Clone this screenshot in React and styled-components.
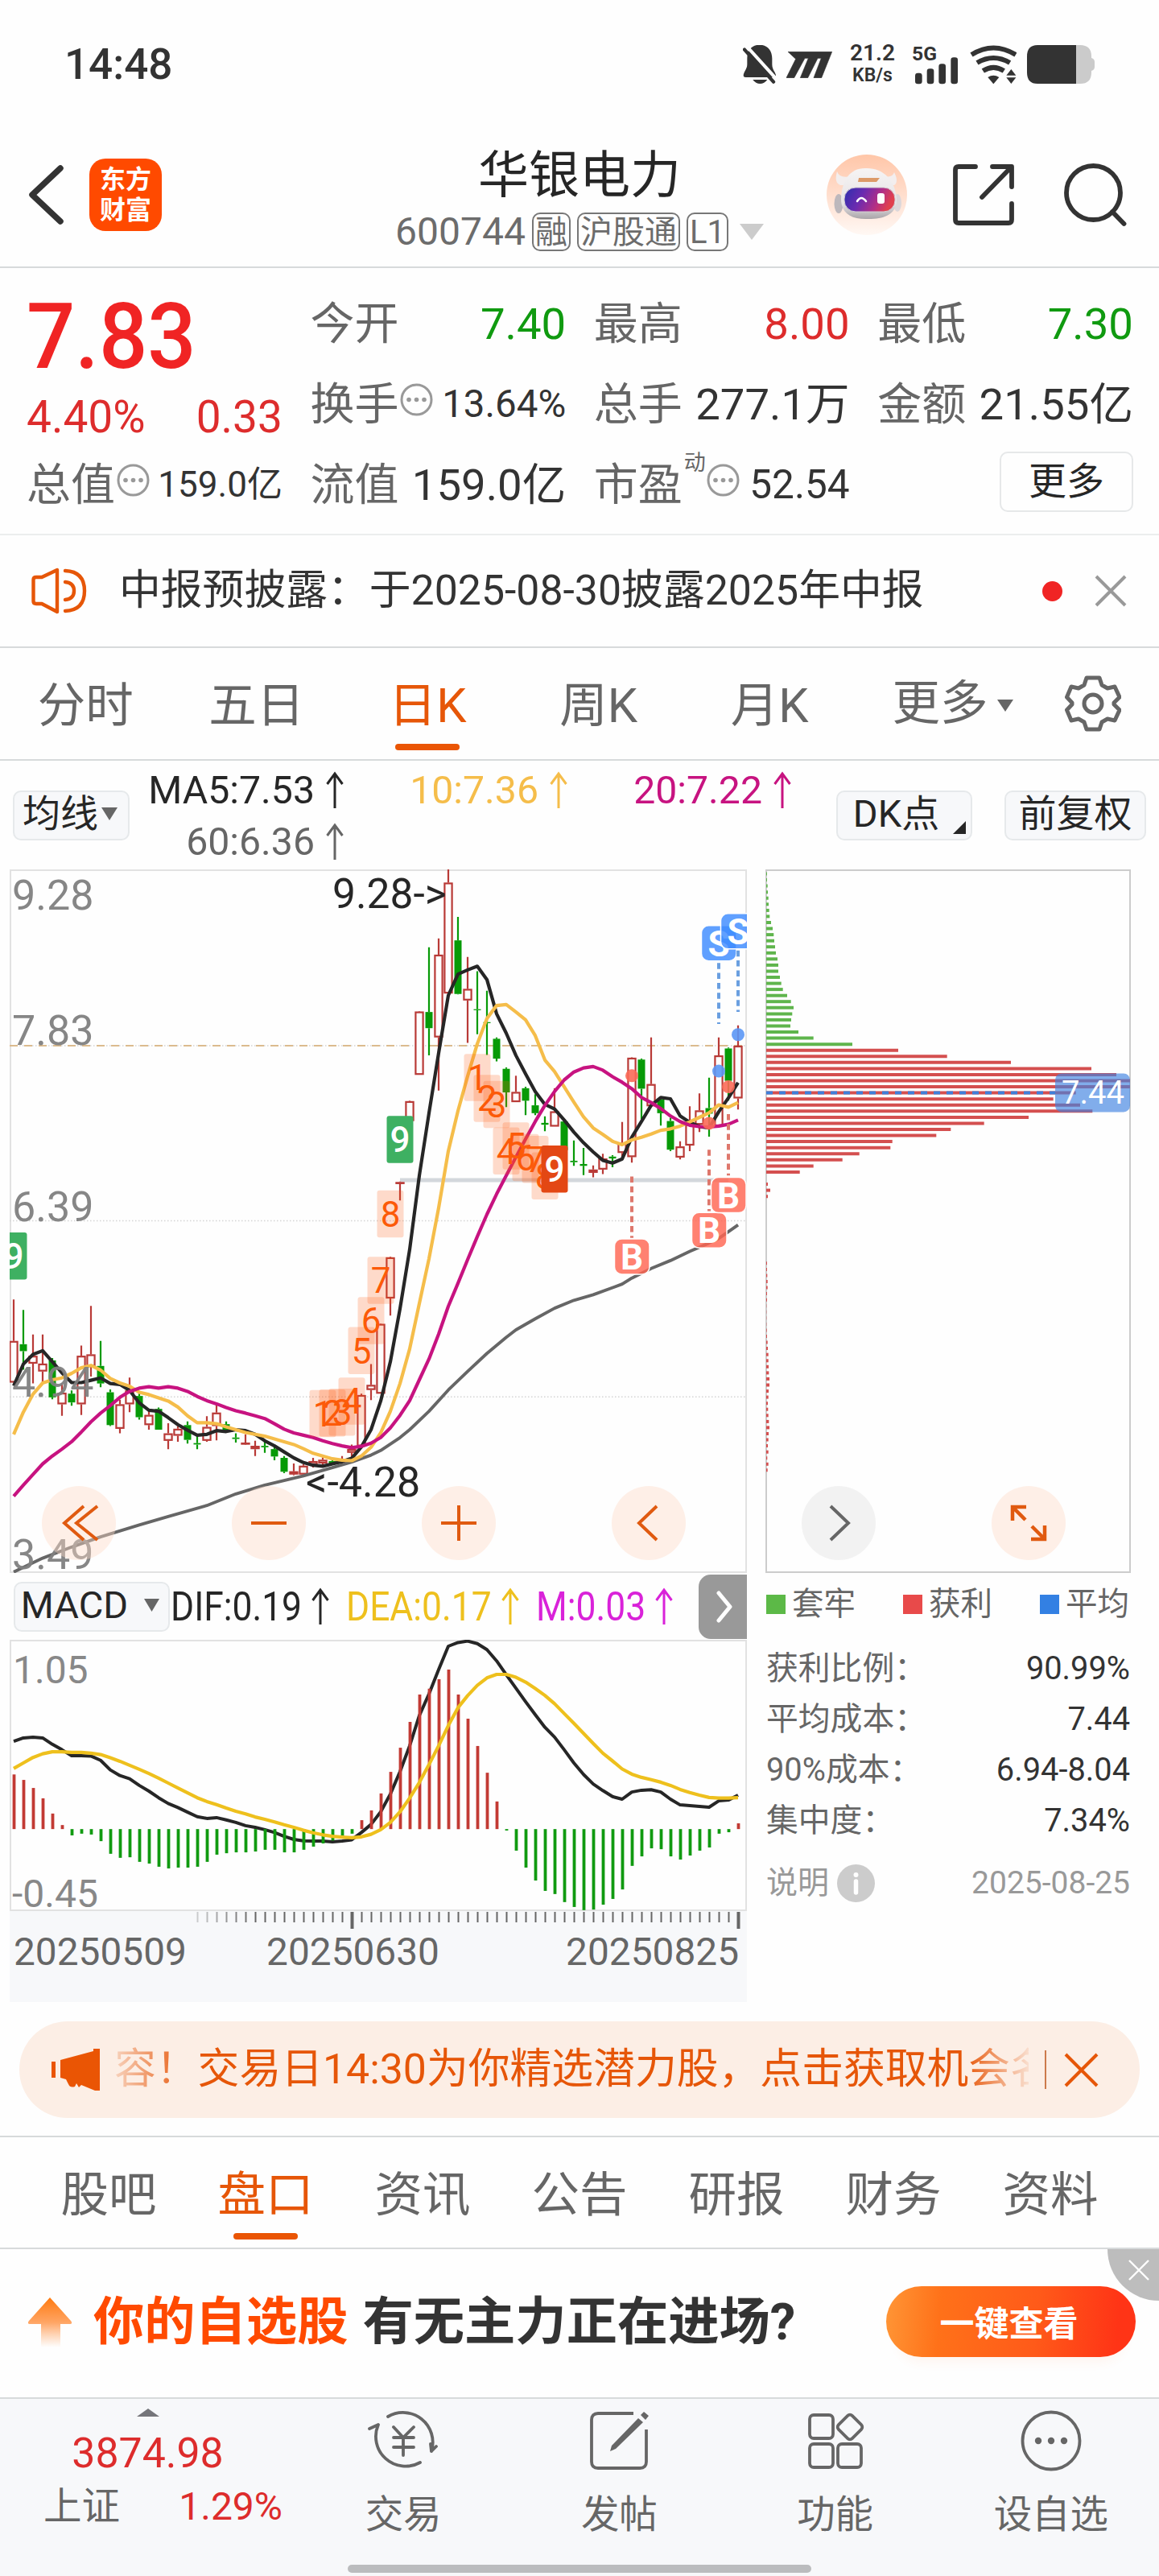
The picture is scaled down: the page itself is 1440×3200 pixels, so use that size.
import React from "react";
import styled, { createGlobalStyle } from "styled-components";

const c = {
  ink: "#262626",
  text: "#333333",
  sub: "#666666",
  mute: "#999999",
  axis: "#888888",
  red: "#dd2c2c",
  green: "#109a10",
  orange: "#e65608",
  line: "#d7dadb",
  panel: "#f7f8fa",
  ma10: "#f5bd4a",
  ma20: "#c71380",
  dea: "#eec01d",
  macd: "#d922d9",
};

const Global = createGlobalStyle`
  * { box-sizing: border-box; }
  body {
    margin: 0;
    background: #fefefe;
    color: ${c.text};
    font-family: Roboto, "Noto Sans CJK SC", sans-serif;
  }
  svg { display: block; flex: none; }
  svg text { font-family: Roboto, "Noto Sans CJK SC", sans-serif; }
`;

const Screen = styled.main`
  width: 1440px;
  height: 3200px;
  display: flex;
  flex-direction: column;
  overflow: hidden;
  white-space: nowrap;
`;

/* ---------- status bar ---------- */

const StatusBar = styled.div`
  height: 152px;
  padding: 8px 80px 0 80px;
  display: flex;
  align-items: center;
`;
const Clock = styled.div`
  font-size: 53px;
  line-height: 60px;
  font-weight: 500;
  margin-right: auto;
`;
const StatusItem = styled.div`
  margin-left: ${(p) => p.$gap}px;
`;
const Speed = styled.div`
  width: 56px;
  display: flex;
  flex-direction: column;
  align-items: center;
  font-weight: 600;
  font-size: 23px;
  line-height: 28px;
  span:first-child { font-size: 28px; line-height: 28px; }
`;

/* ---------- header ---------- */

const Header = styled.header`
  height: 181px;
  border-bottom: 2px solid ${c.line};
  display: grid;
  grid-template-columns: 1fr auto 1fr;
`;
const HeaderLeft = styled.div`
  display: flex;
  align-items: center;
  gap: 31px;
  padding-left: 34px;
`;
const Logo = styled.div`
  width: 90px;
  height: 90px;
  border-radius: 20px;
  background: #ff4a00;
  color: #fff;
  font-weight: 700;
  font-size: 32px;
  line-height: 38px;
  display: flex;
  flex-direction: column;
  align-items: center;
  justify-content: center;
  padding-top: 1px;
`;
const TitleBlock = styled.div`
  padding-top: 28px;
  display: flex;
  flex-direction: column;
  align-items: center;
`;
const Title = styled.h1`
  margin: 0 0 9px;
  font-size: 63px;
  line-height: 75px;
  font-weight: 400;
  color: ${c.ink};
`;
const CodeRow = styled.div`
  display: flex;
  align-items: center;
  height: 48px;
  gap: 8px;
  font-size: 48px;
  line-height: 48px;
  color: #6c6c6c;
`;
const Tag = styled.span`
  height: 48px;
  line-height: 45px;
  padding: 0 2px;
  border: 2px solid #777;
  border-radius: 10px;
  font-size: 40px;
`;
const HeaderRight = styled.div`
  display: flex;
  align-items: center;
  justify-content: flex-end;
  gap: 56px;
  padding-right: 39px;
  svg:nth-child(2) { margin-right: 4px; }
`;

/* ---------- quote ---------- */

const Quote = styled.section`
  height: 332px;
  padding: 19px 32px 0 33px;
  border-bottom: 2px solid #eceeee;
  display: grid;
  grid-template-columns: repeat(4, 1fr);
  grid-template-rows: repeat(3, 100px);
  column-gap: 34.5px;
  line-height: 70px;
`;
const PriceBlock = styled.div`
  grid-row: span 2;
  color: ${c.red};
`;
const Price = styled.div`
  padding-top: 2px;
  font-size: 113px;
  line-height: 130px;
  font-weight: 500;
  color: #f02424;
  transform: scaleX(0.94);
  transform-origin: left center;
`;
const Change = styled.div`
  display: flex;
  justify-content: space-between;
  font-size: 55px;
  line-height: 69px;
`;
const Stat = styled.div`
  display: flex;
  align-items: center;
`;
const StatLabel = styled.span`
  font-size: 55px;
  color: ${c.sub};
`;
const Sup = styled.span`
  font-size: 27px;
  line-height: 30px;
  color: ${c.sub};
  align-self: flex-start;
  margin: 8px -1px 0 2px;
`;
const StatValue = styled.span`
  margin-left: auto;
  font-size: ${(p) => p.$size || 54.5}px;
  color: ${(p) => p.$color || c.text};
`;
const MoreButton = styled.button`
  width: 166px;
  height: 75px;
  margin: -8px 0 0 auto;
  padding: 0;
  align-self: center;
  border: 2px solid #e6e8e9;
  border-radius: 10px;
  background: transparent;
  font: inherit;
  font-size: 47px;
  line-height: 70px;
  color: ${c.ink};
`;

/* ---------- notice ---------- */

const Notice = styled.section`
  height: 140px;
  padding: 0 40px 0 39px;
  border-bottom: 2px solid ${c.line};
  display: flex;
  align-items: center;
`;
const NoticeText = styled.span`
  margin: 0 auto 0 39px;
  font-size: 51.8px;
  line-height: 70px;
`;
const RedDot = styled.i`
  width: 25px;
  height: 25px;
  margin-right: 40px;
  border-radius: 50%;
  background: #f02424;
`;

/* ---------- tabs ---------- */

const TabBar = styled.nav`
  height: ${(p) => p.$height}px;
  padding: 6px 0 0 ${(p) => p.$left}px;
  border-bottom: 2px solid ${c.line};
  display: flex;
`;
const Tab = styled.a`
  width: ${(p) => p.$width}px;
  display: flex;
  flex-direction: column;
  align-items: center;
  font-size: 59.5px;
  line-height: 132px;
  color: ${(p) => (p.$active ? c.orange : c.sub)};
  &::after {
    content: "";
    width: 80px;
    height: 8px;
    margin-top: -19px;
    border-radius: 4px;
    background: ${(p) => (p.$active ? "#ea5504" : "transparent")};
  }
`;
const MoreTab = styled.a`
  width: 214px;
  padding: 0 0 6px 46px;
  display: flex;
  align-items: center;
  gap: 11px;
  font-size: 59.5px;
  line-height: 132px;
  color: ${c.sub};
  svg { margin-top: 4px; }
`;
const GearWrap = styled.div`
  padding: 0 0 6px 46px;
  display: flex;
  align-items: center;
`;

/* ---------- moving average row ---------- */

const MaRow = styled.div`
  height: 135px;
  padding: 0 16px;
  display: flex;
  align-items: center;
`;
const Chip = styled.button`
  position: relative;
  width: ${(p) => p.$width}px;
  height: 62px;
  padding: 0 ${(p) => p.$right || 0}px 3px 0;
  border: 2px solid #e6e9eb;
  border-radius: 10px;
  background: ${c.panel};
  display: flex;
  align-items: center;
  justify-content: center;
  gap: ${(p) => p.$gap || 0}px;
  font: inherit;
  font-size: 47px;
  line-height: 56px;
  white-space: nowrap;
  color: ${c.ink};
`;
const ChipCorner = styled.i`
  position: absolute;
  right: 6px;
  bottom: 6px;
  border-left: 16px solid transparent;
  border-bottom: 16px solid ${c.ink};
`;
const MaLegend = styled.div`
  margin: 2px auto 0 24px;
  display: grid;
  grid-template-columns: 242px 278px 278px;
`;
const MaItem = styled.div`
  display: flex;
  justify-content: flex-end;
  align-items: center;
  gap: 14px;
  font-size: 48.2px;
  line-height: 64px;
  color: ${(p) => p.$color};
`;
const ChipGroup = styled.div`
  display: flex;
  gap: 40px;
`;

/* ---------- charts ---------- */

const Charts = styled.section`
  position: relative;
  height: 1407px;
  padding-left: 12px;
  display: grid;
  grid-template-columns: 916px 454px;
  column-gap: 23px;
  align-items: start;
`;
const Column = styled.div`
  display: flex;
  flex-direction: column;
`;
const Controls = styled.div`
  position: absolute;
  left: 52px;
  top: 766px;
  display: flex;
  gap: 144px;
`;
const RoundButton = styled.button`
  width: 92px;
  height: 92px;
  padding: 0;
  border: 0;
  border-radius: 50%;
  background: ${(p) => (p.$gray ? "rgba(235,235,235,.65)" : "rgba(255,220,200,.42)")};
  display: flex;
  align-items: center;
  justify-content: center;
`;
const MacdHead = styled.div`
  height: 83px;
  padding-left: 5px;
  display: flex;
  align-items: center;
`;
const MacdValue = styled.div`
  width: ${(p) => p.$width}px;
  display: flex;
  align-items: center;
  justify-content: space-between;
  margin-left: ${(p) => p.$gap}px;
  color: ${(p) => p.$color};
  font-size: 50px;
  line-height: 60px;
`;
const Squeezed = styled.span`
  width: 0;
  transform: scaleX(0.888);
  transform-origin: left center;
`;
const NextButton = styled.button`
  width: 60px;
  height: 80px;
  margin-left: auto;
  padding: 0 0 0 6px;
  border: 0;
  border-radius: 15px 0 0 15px;
  background: #999;
  display: flex;
  align-items: center;
  justify-content: center;
`;
const Axis = styled.div`
  height: 113px;
  background: ${c.panel};
`;
const AxisDates = styled.div`
  display: flex;
  justify-content: space-between;
  padding: 0 10px 0 5px;
  font-size: 47.8px;
  line-height: 54px;
  color: ${c.sub};
  span:nth-child(2) { margin-right: 58px; }
`;
const Legend = styled.div`
  height: 78px;
  padding-left: 1px;
  display: grid;
  grid-template-columns: repeat(3, 170px);
  width: 454px;
`;
const LegendItem = styled.div`
  display: flex;
  align-items: center;
  gap: 8px;
  font-size: 39.5px;
  line-height: 50px;
  color: ${c.sub};
  &::before {
    content: "";
    width: 24px;
    height: 24px;
    background: ${(p) => p.$color};
  }
`;
const CostList = styled.div`
  padding-top: 9px;
`;
const CostRow = styled.div`
  height: ${(p) => p.$height || 63}px;
  padding: 0 1px;
  display: flex;
  align-items: center;
  justify-content: space-between;
  font-size: 39.8px;
  line-height: 50px;
  color: ${(p) => (p.$muted ? c.mute : c.sub)};
`;
const CostValue = styled.span`
  color: ${(p) => (p.$muted ? c.mute : c.text)};
  font-size: ${(p) => (p.$muted ? 39 : 39.8)}px;
`;
const Explain = styled.span`
  display: flex;
  align-items: center;
  gap: 10px;
  font-size: 39px;
`;

/* ---------- promo ---------- */

const PromoWrap = styled.section`
  height: 168px;
  padding: 24px 24px 0;
  border-bottom: 2px solid ${c.line};
`;
const Promo = styled.div`
  height: 120px;
  padding: 0 51px 0 40px;
  border-radius: 60px;
  background: #fceee5;
  display: flex;
  align-items: center;
  color: ${c.orange};
`;
const Marquee = styled.div`
  width: 1136px;
  margin-left: 18px;
  overflow: hidden;
  font-size: 51.8px;
  line-height: 76px;
  text-indent: -2px;
  mask-image: linear-gradient(90deg, rgba(0,0,0,.2) 0, #000 90px, #000 calc(100% - 80px), rgba(0,0,0,.1) 100%);
`;
const Divider = styled.i`
  width: 2px;
  height: 48px;
  margin: 0 22px 0 20px;
  background: #cc7a4c;
`;

/* ---------- ad ---------- */

const Ad = styled.section`
  position: relative;
  height: 186px;
  padding: 2px 29px 6px 34px;
  border-bottom: 2px solid ${c.line};
  display: flex;
  align-items: center;
`;
const AdText = styled.span`
  margin-left: ${(p) => p.$gap}px;
  font-size: 63.3px;
  line-height: 90px;
  font-weight: 700;
  color: ${(p) => p.$color};
`;
const AdButton = styled.button`
  width: 310px;
  height: 88px;
  margin-left: auto;
  padding: 0 5px 2px 0;
  border: 0;
  border-radius: 44px;
  background: linear-gradient(95deg, #ff9636, #ff7119 22%, #ff5a19 60%, #ff3416 92%);
  box-shadow: 0 20px 14px -14px rgba(255, 120, 40, 0.07);
  font: inherit;
  font-weight: 700;
  font-size: 43px;
  color: #fff;
`;
const AdClose = styled.button`
  position: absolute;
  right: 0;
  top: 0;
  width: 64px;
  height: 64px;
  padding: 0 0 12px 14px;
  border: 0;
  border-radius: 0 0 0 64px;
  background: #bdbdbd;
  display: flex;
  align-items: center;
  justify-content: center;
`;

/* ---------- bottom navigation ---------- */

const BottomNav = styled.footer`
  position: relative;
  flex: 1;
  background: ${c.panel};
  display: flex;
`;
const IndexBox = styled.div`
  width: 367px;
  padding-top: 12px;
  display: flex;
  flex-direction: column;
  align-items: center;
  color: ${c.red};
`;
const IndexValue = styled.div`
  margin-top: 14px;
  font-size: 51.8px;
  line-height: 64px;
`;
const IndexRow = styled.div`
  width: 367px;
  padding: 0 16px 0 54px;
  margin-top: 2px;
  display: flex;
  justify-content: space-between;
  font-size: 48px;
  line-height: 64px;
  span:first-child { font-size: 47.5px; color: ${c.sub}; }
`;
const NavItem = styled.a`
  width: 268.5px;
  padding-top: 10px;
  display: flex;
  flex-direction: column;
  align-items: center;
  font-size: 47.5px;
  line-height: 60px;
  color: ${c.sub};
  svg { margin-bottom: 20px; }
`;
const HomeBar = styled.i`
  position: absolute;
  left: 432px;
  bottom: 4px;
  width: 576px;
  height: 10px;
  border-radius: 5px;
  background: #bbbcbe;
`;

/* ---------- icons ---------- */

const Cross = ({ size, color, width = 4 }) => (
  <svg width={size} height={size} viewBox={`0 0 ${size} ${size}`}>
    <path d={`M2 2L${size - 2} ${size - 2}M${size - 2} 2L2 ${size - 2}`} stroke={color} strokeWidth={width} />
  </svg>
);
const Down = ({ w, h, color, up }) => (
  <svg width={w} height={h} viewBox={`0 0 ${w} ${h}`}>
    <path d={up ? `M0 ${h}H${w}L${w / 2} 0Z` : `M0 0H${w}L${w / 2} ${h}Z`} fill={color} />
  </svg>
);
const ArrowUp = ({ color }) => (
  <svg width="22" height="48" viewBox="0 0 22 48">
    <path d="M11 46V4M1.5 16L11 3L20.5 16" fill="none" stroke={color} strokeWidth="3" />
  </svg>
);
const DotsIcon = styled.svg`
  margin: 0 0 11px 2px;
`;
const Dots = () => (
  <DotsIcon width="41" height="41" viewBox="0 0 41 41">
    <circle cx="20.5" cy="20.5" r="18.5" fill="none" stroke="#999" strokeWidth="3" />
    {[11, 20.5, 30].map((x) => (
      <circle key={x} cx={x} cy="20.5" r="2.8" fill="#999" />
    ))}
  </DotsIcon>
);
const BellOff = () => (
  <svg width="42" height="48" viewBox="36 78 126 144">
    <path d="M98 77C70 77 52 97 52 128V150C52 168 38 178 38 192Q38 198 46 198H151Q159 198 159 190C157 178 145 170 145 150V128C145 97 126 77 98 77Z" fill="#333" />
    <path d="M73 207H127Q116 222 100 222T73 207Z" fill="#333" />
    <path d="M50 82L164 208" stroke="#fefefe" strokeWidth="12" />
    <path d="M42 95L150 215" stroke="#333" strokeWidth="13" strokeLinecap="round" />
  </svg>
);
const MLogo = () => (
  <svg width="57" height="33" viewBox="197 100 171 99">
    <path d="M203 101H367L328 198H299L327 125H314L277 198H249L279 125H266L226 198H197L232 128Z" fill="#333" stroke="#333" strokeWidth="2" strokeLinejoin="round" />
  </svg>
);
const Signal = () => (
  <svg width="56" height="48" viewBox="672 80 168 144" overflow="visible">
    <text x="669" y="136" fontSize="74" fontWeight="700" fill="#333">5G</text>
    {[[681, 184], [725, 168], [769, 150], [814, 126]].map(([x, y]) => (
      <rect key={x} x={x} y={y} width="26" height={225 - y} rx="10" fill="#333" />
    ))}
  </svg>
);
const Wifi = () => (
  <svg width="58" height="48" viewBox="884 80 174 144">
    <g fill="none" stroke="#333" strokeWidth="18">
      <path d="M890 116Q972 65 1055 116" />
      <path d="M911 146Q972 110 1033 146" />
      <path d="M933 176Q972 151 1011 176" />
    </g>
    <path d="M951 200Q972 187 993 200L972 225Z" fill="#333" />
    <path d="M1020 193H1056L1038 170ZM1020 201H1056L1038 224Z" fill="#333" />
  </svg>
);
const Battery = () => (
  <svg width="84" height="48" viewBox="0 0 84 48">
    <path d="M14 0H66Q80 0 80 14V16Q84 17 84 21V27Q84 31 80 32V34Q80 48 66 48H14Z" fill="#cbcbcb" />
    <path d="M13 0H61V48H13Q0 48 0 34V14Q0 0 13 0Z" fill="#333" />
  </svg>
);
const Back = () => (
  <svg width="46" height="74" viewBox="0 0 46 74">
    <path d="M41 4L6 37L41 70" fill="none" stroke="#333" strokeWidth="7.500" strokeLinecap="round" strokeLinejoin="round" />
  </svg>
);
const Robot = () => (
  <svg width="100" height="100" viewBox="0 0 100 100">
    <defs>
      <linearGradient id="halo" x2="0" y2="1">
        <stop offset="0" stopColor="#ffc6a8" />
        <stop offset=".6" stopColor="#ffe3d5" />
        <stop offset="1" stopColor="#fff8f4" />
      </linearGradient>
      <linearGradient id="shell" x2="0" y2="1">
        <stop offset="0" stopColor="#f6f4f4" />
        <stop offset=".7" stopColor="#e6e3e5" />
        <stop offset="1" stopColor="#a9a4a8" />
      </linearGradient>
      <linearGradient id="visor" x2="1" y2=".25">
        <stop offset="0" stopColor="#2c2fae" />
        <stop offset=".4" stopColor="#6a2bb0" />
        <stop offset=".75" stopColor="#b32f86" />
        <stop offset="1" stopColor="#e0404e" />
      </linearGradient>
    </defs>
    <circle cx="50" cy="50" r="50" fill="url(#halo)" />
    <path d="M13 21Q9 35 17 38L26 38L30 27Q16 30 13 21ZM84 22Q90 34 84 38L76 38L72 27Q82 29 84 22Z" fill="#f3eeee" />
    <ellipse cx="15" cy="61" rx="5.500" ry="12" fill="#bdb8bc" />
    <ellipse cx="88" cy="60" rx="5" ry="11" fill="#dcd7da" />
    <path d="M48 17C28 17 19 33 18 55C18 74 32 81 52 80C74 80 87 73 87 56C86 32 70 16 48 17Z" fill="url(#shell)" />
    <path d="M40 29H66L62 34H39Z" fill="#dc9a68" />
    <rect x="22" y="41" width="63" height="30" rx="14" fill="url(#visor)" stroke="#d2cdd2" strokeWidth="1" />
    <path d="M38 58Q43 50 49 58" fill="none" stroke="#fff" strokeWidth="2.500" strokeLinecap="round" />
    <rect x="63" y="48" width="9" height="13" rx="3" fill="#fff" />
  </svg>
);
const Share = () => (
  <svg width="78" height="78" viewBox="0 0 78 78">
    <path d="M29 4H8Q4 4 4 8V70Q4 74 8 74H70Q74 74 74 70V50M50 4H74V29M73 5L37 42" fill="none" stroke="#333" strokeWidth="5.800" strokeLinecap="round" strokeLinejoin="round" />
  </svg>
);
const Search = () => (
  <svg width="80" height="80" viewBox="0 0 80 80">
    <circle cx="37.500" cy="37.500" r="33.500" fill="none" stroke="#333" strokeWidth="5.800" />
    <path d="M61 61L75.500 76" stroke="#333" strokeWidth="5.800" strokeLinecap="round" />
  </svg>
);
const Speaker = () => (
  <svg width="70" height="58" viewBox="0 0 70 58">
    <g fill="none" stroke={c.orange} strokeWidth="4.400" strokeLinejoin="round" strokeLinecap="round">
      <path d="M2.500 15Q2.500 12 6 12H13L32 3V55L13 45H6Q2.500 45 2.500 42Z" />
      <path d="M42 18Q53 19 53 29T42 40M42 4Q66 5 66 29T42 54" />
    </g>
  </svg>
);
const Gear = () => (
  <svg width="70" height="70" viewBox="0 0 70 70">
    <g fill="none" stroke="#666" strokeWidth="5" strokeLinejoin="round">
      <path d="M27 3H43L46 12L53 16L62 14L68 27L61 34V36L68 43L62 56L53 54L46 58L43 67H27L24 58L17 54L8 56L2.500 43L9 36V34L2.500 27L8 14L17 16L24 12Z" />
      <circle cx="35" cy="35" r="11" />
    </g>
  </svg>
);
const Megaphone = () => (
  <svg width="62" height="52" viewBox="0 0 62 52">
    <path d="M0 16H5V36H0ZM11 14L52 3V0H60V52H54L37 45L34 48L31 43L29 47Q23 49 21 44L18 38L11 36Z" fill="#ea5504" />
  </svg>
);
const Info = () => (
  <svg width="47" height="47" viewBox="0 0 47 47">
    <circle cx="23.500" cy="23.500" r="23.500" fill="#cccccc" />
    <circle cx="23.500" cy="13" r="3" fill="#fff" />
    <path d="M23.500 21V35" stroke="#fff" strokeWidth="5.500" strokeLinecap="round" />
  </svg>
);
const AdArrow = () => (
  <svg width="56" height="64" viewBox="0 0 56 64">
    <defs>
      <linearGradient id="rise" x2="0" y2="1">
        <stop offset="0" stopColor="#ff7a10" />
        <stop offset=".5" stopColor="#ffa564" />
        <stop offset="1" stopColor="#ffb27a" stopOpacity="0" />
      </linearGradient>
    </defs>
    <path d="M28 2L54 31Q57 35 52 35H41V64H17V35H4Q-1 35 2 31Z" fill="url(#rise)" />
  </svg>
);
const controlIcons = {
  first: "M34 2L10 23L34 44M51 2L25 23L51 44",
  minus: "M1 23H45",
  plus: "M1 23H45M23 1V45",
  prev: "M33 2L11 23L33 44",
  next: "M13 2L35 23L13 44",
  full: "M20 3H3V20M3 3L19 19M26 43H43V26M43 43L27 27",
};
const ControlIcon = ({ name }) => {
  const w = name === "first" ? 56 : 46;
  return (
    <svg width={w} height="46" viewBox={`0 0 ${w} 46`}>
      <path
        d={controlIcons[name]}
        fill="none"
        stroke={name === "next" ? "#666" : "#e05a10"}
        strokeWidth={name === "full" ? 4.5 : 4}
      />
    </svg>
  );
};

const TradeIcon = () => (
  <svg width="90" height="84" viewBox="0 0 90 84">
    <g fill="none" stroke="#666" strokeWidth="3.800" strokeLinecap="round" strokeLinejoin="round">
      <path d="M26 12A37 37 0 0 1 80 55L86 49M80 55L79 46" />
      <path d="M66 69A37 37 0 0 1 14 22L3 27" />
      <path d="M33 25L45 38L58 25M33 38H58M33 50H58M45 38V60" />
    </g>
  </svg>
);
const PostIcon = () => (
  <svg width="84" height="84" viewBox="0 0 84 84">
    <path d="M60 8H16Q8 8 8 16V68Q8 76 16 76H68Q76 76 76 68V28" fill="none" stroke="#666" strokeWidth="3.800" />
    <path d="M69 10L73 6L79 11L75 16ZM66 14L72 19L38 52L31 55L33 48Z" fill="#666" />
  </svg>
);
const GridIcon = () => (
  <svg width="84" height="84" viewBox="0 0 84 84">
    <g fill="none" stroke="#666" strokeWidth="3.800">
      <rect x="10" y="10" width="29" height="29" rx="5" />
      <rect x="10" y="46" width="29" height="29" rx="5" />
      <rect x="45" y="46" width="29" height="29" rx="5" />
      <rect x="48" y="13" width="24" height="24" rx="4" transform="rotate(45 60 25)" />
    </g>
  </svg>
);
const MoreIcon = () => (
  <svg width="84" height="84" viewBox="0 0 84 84">
    <circle cx="42" cy="42" r="35.500" fill="none" stroke="#666" strokeWidth="3.800" />
    {[26, 42, 58].map((x) => (
      <circle key={x} cx={x} cy="42" r="4.200" fill="#666" />
    ))}
  </svg>
);

/* ---------- chart data ---------- */

const xAt = (i) => 5 + 12 * i;
const kY = (v) => v * 0.574 - 10;
const mY = (v) => v / 2.8 - 97;

// [rising, high, body top, body bottom, low]
const candles = [
  [1, 948, 1038, 1128, 1130], [0, 971, 1045, 1060, 1100], [1, 1024, 1070, 1087, 1130], [1, 1024, 1087, 1104, 1128],
  [0, 1075, 1080, 1160, 1164], [1, 1130, 1150, 1175, 1200], [0, 1145, 1152, 1171, 1178], [1, 1048, 1070, 1175, 1198],
  [1, 962, 1067, 1093, 1115], [0, 1038, 1092, 1130, 1138], [0, 1143, 1149, 1220, 1222], [1, 1165, 1175, 1228, 1238],
  [1, 1117, 1145, 1175, 1192], [0, 1152, 1157, 1203, 1208], [1, 1190, 1198, 1220, 1230], [0, 1182, 1185, 1230, 1230],
  [1, 1216, 1238, 1254, 1272], [1, 1222, 1228, 1243, 1256], [0, 1212, 1220, 1252, 1260], [0, 1243, 1259, 1262, 1272],
  [1, 1201, 1224, 1254, 1256], [1, 1177, 1193, 1222, 1253], [0, 1212, 1218, 1232, 1237], [0, 1238, 1247, 1250, 1258],
  [1, 1240, 1258, 1261, 1262], [1, 1254, 1265, 1272, 1287], [0, 1255, 1265, 1268, 1280], [0, 1268, 1272, 1288, 1296],
  [0, 1287, 1291, 1321, 1324], [1, 1303, 1320, 1327, 1329], [1, 1305, 1308, 1327, 1332], [1, 1291, 1298, 1306, 1312],
  [1, 1290, 1295, 1303, 1309], [0, 1293, 1298, 1304, 1306], [1, 1287, 1296, 1300, 1306], [1, 1262, 1272, 1280, 1290],
  [1, 1152, 1155, 1266, 1270], [1, 1088, 1133, 1144, 1166], [1, 1000, 1001, 1152, 1152], [1, 856, 857, 946, 983],
  [1, 693, 694, 697, 734], [1, 518, 519, 562, 562], [1, 324, 325, 462, 462], [0, 186, 326, 361, 420],
  [1, 167, 202, 381, 496], [1, 17, 46, 286, 286], [0, 120, 171, 287, 288], [1, 207, 276, 301, 393],
  [0, 238, 320, 322, 374], [0, 280, 348, 350, 419], [0, 381, 384, 427, 433], [0, 446, 449, 500, 532],
  [1, 464, 499, 521, 521], [0, 488, 491, 518, 549], [0, 504, 528, 545, 549], [0, 552, 566, 570, 584],
  [1, 491, 541, 574, 574], [0, 560, 563, 625, 625], [0, 604, 648, 651, 659], [0, 620, 655, 659, 679],
  [1, 658, 667, 674, 684], [1, 633, 643, 667, 677], [0, 636, 639, 643, 662], [1, 564, 609, 631, 640],
  [1, 424, 425, 640, 652], [0, 427, 429, 492, 558], [1, 381, 482, 530, 530], [0, 512, 515, 545, 572],
  [0, 555, 562, 624, 627], [1, 606, 617, 641, 645], [1, 530, 568, 615, 627], [1, 502, 539, 570, 586],
  [0, 468, 534, 546, 596], [1, 381, 420, 573, 575], [0, 403, 405, 475, 518], [1, 355, 399, 513, 537],
];
const ma5 = [
  1135, 1088, 1067, 1059, 1083, 1107, 1128, 1128, 1123, 1118, 1130, 1132, 1145, 1172, 1188, 1190, 1204, 1219, 1231,
  1242, 1240, 1232, 1234, 1230, 1232, 1240, 1254, 1265, 1278, 1291, 1301, 1307, 1309, 1304, 1299, 1292, 1267, 1230,
  1168, 1083, 968, 840, 680, 545, 415, 290, 244, 235, 227, 256, 330, 372, 420, 460, 498, 526, 536, 560, 586, 609, 629,
  647, 653, 644, 597, 563, 528, 511, 514, 551, 565, 574, 577, 542, 512, 479,
];
const ma10 = [
  1240, 1192, 1153, 1129, 1122, 1118, 1108, 1096, 1091, 1101, 1119, 1129, 1136, 1149, 1154, 1161, 1168, 1181, 1200,
  1215, 1215, 1217, 1224, 1230, 1236, 1240, 1244, 1250, 1256, 1262, 1271, 1281, 1287, 1293, 1296, 1297, 1287, 1268,
  1237, 1190, 1130, 1055, 957, 860, 750, 627, 540, 465, 395, 340, 312, 310, 326, 343, 377, 430, 455, 488, 521, 553,
  577, 591, 606, 613, 603, 597, 590, 582, 579, 573, 564, 554, 544, 527, 532, 522,
];
const ma20 = [
  1374, 1350, 1327, 1304, 1287, 1272, 1256, 1235, 1213, 1194, 1178, 1160, 1147, 1140, 1137, 1140, 1137, 1140, 1147,
  1158, 1167, 1174, 1182, 1189, 1194, 1200, 1206, 1217, 1229, 1237, 1242, 1247, 1254, 1260, 1265, 1269, 1266, 1259,
  1247, 1226, 1199, 1167, 1122, 1077, 1023, 963, 913, 862, 812, 764, 720, 680, 640, 601, 563, 528, 498, 473, 456, 447,
  444, 452, 466, 478, 492, 511, 522, 535, 551, 563, 571, 574, 575, 573, 569, 560,
];
const ma60 = [
  [0, 1538], [3, 1508], [6, 1484], [9, 1462], [13, 1436], [16, 1418], [20, 1394], [23, 1369], [26, 1350], [30, 1330],
  [33, 1312], [35, 1300], [37, 1285], [38, 1275], [40, 1247], [41, 1230], [43, 1190], [45, 1144], [47, 1104],
  [49, 1065], [51, 1030], [52, 1014], [54, 990], [56, 967], [58, 950], [60, 938], [63, 915], [64, 902], [66, 881],
  [68, 864], [70, 844], [72, 826], [73, 816], [75, 787],
];
// [candle index, top, digit, tone]
const counts = [
  [0, 803, 9, "green"], [32, 1144, 1], [33, 1143, 2], [34, 1141, 3], [35, 1117, 4], [36, 1008, 5], [37, 943, 6],
  [38, 856, 7], [39, 712, 8], [40, 551, 9, "green"], [48, 417, 1], [49, 462, 2], [50, 475, 3], [51, 576, 4],
  [52, 565, 5], [53, 590, 6], [54, 594, 7], [55, 630, 8], [56, 615, 9, "red"],
];
// [candle index, box top, dash start, dash end, dot, letter]
const signals = [
  [73, 139, 220, 352, 454, "S"], [75, 113, 193, 326, 375, "S"], [64, 817, 682, 815, 464, "B"],
  [72, 760, 624, 757, 567, "B"], [74, 684, 547, 680, 488, "B"],
];

const dif = [
  625, 613, 610, 613, 635, 654, 675, 675, 676, 691, 724, 744, 755, 778, 798, 821, 841, 855, 871, 887, 893, 890, 898,
  907, 918, 924, 932, 942, 955, 966, 971, 972, 972, 974, 972, 967, 942, 914, 870, 808, 730, 640, 535, 460, 375, 294,
  281, 276, 285, 306, 345, 393, 440, 487, 532, 576, 610, 654, 700, 740, 773, 796, 817, 826, 801, 795, 793, 801, 826,
  846, 848, 851, 854, 832, 829, 812,
];
const dea = [
  719, 700, 681, 668, 661, 661, 663, 663, 666, 671, 682, 694, 708, 722, 737, 753, 770, 787, 804, 821, 834, 845, 857,
  868, 877, 888, 896, 905, 915, 924, 934, 943, 950, 955, 958, 960, 957, 948, 932, 907, 870, 822, 768, 706, 640, 570,
  508, 466, 430, 404, 392, 392, 402, 419, 441, 465, 494, 528, 562, 597, 632, 666, 693, 721, 739, 750, 758, 767, 778,
  792, 803, 812, 820, 822, 822, 821,
];
const hist = [
  740, 759, 787, 823, 876, 916, 952, 946, 949, 972, 1016, 1030, 1028, 1044, 1050, 1061, 1067, 1064, 1064, 1061, 1044,
  1019, 1014, 1011, 1011, 1008, 1002, 1002, 1011, 1011, 1002, 991, 980, 970, 960, 946, 899, 865, 806, 731, 647, 557,
  462, 442, 409, 375, 462, 546, 641, 734, 834, 935, 1005, 1064, 1109, 1145, 1156, 1184, 1201, 1212, 1210, 1193, 1173,
  1140, 1058, 1025, 997, 1000, 1025, 1036, 1022, 1005, 994, 946, 941, 910,
];
const chips = [
  3, 3, 5, 6, 8, 9, 11, 13, 18, 24, 28, 30, 33, 36, 42, 45, 45, 51, 56, 62, 78, 92, 102, 97, 93, 90, 120, 176, 321,
  492, 674, 912, 1212, 1305, 1356, 1356, 1154, 1070, 1170, 1216, 978, 812, 688, 634, 470, 463, 347, 284, 176, 125, 0,
  6, 15, 6, 0, 0, 0, 0, 0, 0, 0, 0, 0, 0, 3, 3, 4, 5, 5, 3, 3, 1, 1, 1, 1, 2, 3, 5, 6, 8, 8, 9, 10, 12, 12, 9, 8, 6,
  7, 8, 10, 12, 9, 8, 6, 8, 4, 8, 5,
];

const poly = (values, fy) => values.map((v, i) => `${xAt(i)},${fy(v).toFixed(1)}`).join(" ");

const Candle = ({ i, data: [up, hi, top, bot, lo] }) => {
  const x = xAt(i);
  const color = up ? "#b93a37" : "#079a07";
  const t = kY(top);
  const h = Math.max(kY(bot) - t, 1.2);
  return (
    <g stroke={color} strokeWidth="2.2">
      <path d={`M${x} ${kY(hi)}V${t}M${x} ${t + h}V${kY(lo)}`} />
      {up ? (
        <rect x={x - 4.6} y={t + 1} width="9.2" height={Math.max(h - 2, 0.5)} fill="#fefefe" strokeWidth="2.2" />
      ) : (
        <rect x={x - 4.5} y={t} width="9" height={h} fill={color} stroke="none" />
      )}
    </g>
  );
};

const countFill = { green: "#3eb062", red: "#e34714" };
const Count = ({ data: [i, top, n, tone] }) => (
  <g>
    <rect x={xAt(i) - 16.5} y={kY(top)} width="33" height="58.500" rx="3" fill={tone ? countFill[tone] : "rgba(255,92,20,.22)"} />
    <text x={xAt(i)} y={kY(top) + 45} fontSize="44" textAnchor="middle" fontWeight={tone ? 500 : 400} fill={tone ? "#fff" : "#fc5a08"}>{n}</text>
  </g>
);

const Marker = ({ data: [i, top, from, to, dot, letter] }) => {
  const sell = letter === "S";
  const x = xAt(i);
  return (
    <g>
      <path d={`M${x} ${kY(from)}V${kY(to)}`} stroke={sell ? "#6a9fe0" : "#de776c"} strokeWidth="4" strokeDasharray="7.5 4.8" />
      <circle cx={x} cy={kY(dot)} r="8" fill={sell ? "#5b97f5" : "#fb6a58"} fillOpacity=".9" />
      <rect x={x - 21.5} y={kY(top)} width="43.500" height="44" rx="9" fill={sell ? "#3d8bff" : "#ff6552"} fillOpacity=".82" stroke="#fff" strokeWidth="1.500" />
      <text x={x} y={kY(top) + 38} fontSize="44" fontWeight="700" textAnchor="middle" fill="#fff">{letter}</text>
    </g>
  );
};

const KChart = () => (
  <svg width="916" height="874" viewBox="0 0 916 874">
    <rect x="1" y="1" width="914" height="872" fill="none" stroke="#e2e2e2" strokeWidth="2" />
    {[399, 778, 1159].map((v) => (
      <path key={v} d={`M0 ${kY(v)}H916`} stroke="#d4d4d4" strokeWidth="1.500" strokeDasharray="1.500 2.500" />
    ))}
    <path d={`M0 ${kY(399)}H916`} stroke="#dcbb8e" strokeWidth="2" strokeDasharray="10 8" />
    <path d={`M${xAt(40)} ${kY(690)}H${xAt(74)}`} stroke="#d3d7dc" strokeWidth="5" />
    {candles.map((d, i) => <Candle key={i} i={i} data={d} />)}
    <g fill="none" strokeLinejoin="round">
      <polyline points={ma60.map(([i, v]) => `${xAt(i)},${kY(v).toFixed(1)}`).join(" ")} stroke="#666" strokeWidth="3.900" />
      <polyline points={poly(ma5, kY)} stroke="#262626" strokeWidth="4.200" />
      <polyline points={poly(ma10, kY)} stroke={c.ma10} strokeWidth="4.200" />
      <polyline points={poly(ma20, kY)} stroke={c.ma20} strokeWidth="4.200" />
    </g>
    {[["9.28", 105], ["7.83", 398], ["6.39", 778], ["4.94", 1158], ["3.49", 1532]].map(([t, v]) => (
      <text key={t} x="3" y={kY(v)} fontSize="52" fill="#808080" fillOpacity=".95">{t}</text>
    ))}
    <text x="401" y={kY(101)} fontSize="51.500" fill={c.ink}>{"9.28->"}</text>
    <text x="368" y={kY(1375)} fontSize="52" fill={c.ink}>{"<-4.28"}</text>
    {counts.map((d, i) => <Count key={i} data={d} />)}
    {signals.map((d, i) => <Marker key={i} data={d} />)}
  </svg>
);

const MacdChart = () => (
  <svg width="916" height="337" viewBox="0 0 916 337">
    <rect x="1" y="1" width="914" height="335" fill="none" stroke="#e2e2e2" strokeWidth="2" />
    <text x="4" y="54" fontSize="48" fill={c.axis}>1.05</text>
    <text x="3" y="332" fontSize="48" fill={c.axis}>-0.45</text>
    <polyline points={poly(dif, mY)} fill="none" strokeLinejoin="round" stroke="#262626" strokeWidth="4" />
    {hist.map((v, i) => (
      <path key={i} d={`M${xAt(i) + 0.5} ${mY(930)}V${mY(v)}`} stroke={v < 930 ? "#c23a34" : "#109a10"} strokeWidth="3.800" />
    ))}
    <polyline points={poly(dea, mY)} fill="none" strokeLinejoin="round" stroke={c.dea} strokeWidth="4.200" />
  </svg>
);

const Ticks = () => (
  <svg width="916" height="24" viewBox="0 0 916 24">
    {Array.from({ length: 57 }, (_, k) => {
      const i = k + 19;
      const major = i === 35 || i === 75;
      return (
        <path key={i} d={`M${xAt(i) + 0.5} 1V${major ? 22 : 14}`} stroke="#666" strokeWidth={major ? 4 : 2} opacity={Math.min(1, 0.3 + k * 0.12)} />
      );
    })}
  </svg>
);

const ChipChart = () => (
  <svg width="454" height="874" viewBox="0 0 454 874">
    <rect x="1" y="1" width="452" height="872" fill="none" stroke="#cccccc" strokeWidth="2" />
    {chips.map((w, k) => w > 0 && (
      <path key={k} d={`M1 ${kY(27 + 13.17 * k).toFixed(1)}h${(w / 3).toFixed(1)}`} stroke={k < 29 ? "#5fb54c" : "#d44f4f"} strokeWidth="4" />
    ))}
    <path d={`M1 ${kY(501)}H360`} stroke="#3f7fd9" strokeWidth="4" strokeDasharray="8 8" />
    <rect x="360" y={kY(459)} width="93" height="48" rx="8" fill="#3f83e0" fillOpacity=".66" />
    <text x="407" y={kY(525)} fontSize="40" textAnchor="middle" fill="#fff">7.44</text>
  </svg>
);

/* ---------- page ---------- */

const stats = [
  { label: "今开", value: "7.40", color: c.green },
  { label: "最高", value: "8.00", color: c.red },
  { label: "最低", value: "7.30", color: c.green },
  { label: "换手", value: "13.64%", dots: true, size: 47.5 },
  { label: "总手", value: "277.1万" },
  { label: "金额", value: "21.55亿" },
  { label: "总值", value: "159.0亿", dots: true, size: 44 },
  { label: "流值", value: "159.0亿" },
  { label: "市盈", value: "52.54", dots: true, sup: "动", size: 49.5 },
];
const costs = [
  ["获利比例：", "90.99%"],
  ["平均成本：", "7.44"],
  ["90%成本：", "6.94-8.04"],
  ["集中度：", "7.34%"],
];

export default function App() {
  return (
    <Screen>
      <Global />
      <StatusBar>
        <Clock>14:48</Clock>
        <BellOff />
        <StatusItem $gap={12}><MLogo /></StatusItem>
        <StatusItem $gap={22}><Speed><span>21.2</span><span>KB/s</span></Speed></StatusItem>
        <StatusItem $gap={22}><Signal /></StatusItem>
        <StatusItem $gap={15}><Wifi /></StatusItem>
        <StatusItem $gap={13}><Battery /></StatusItem>
      </StatusBar>

      <Header>
        <HeaderLeft>
          <Back />
          <Logo><span>东方</span><span>财富</span></Logo>
        </HeaderLeft>
        <TitleBlock>
          <Title>华银电力</Title>
          <CodeRow>
            600744
            <Tag>融</Tag>
            <Tag>沪股通</Tag>
            <Tag>L1</Tag>
            <StatusItem $gap={6}><Down w={30} h={20} color="#cccccc" /></StatusItem>
          </CodeRow>
        </TitleBlock>
        <HeaderRight>
          <Robot />
          <Share />
          <Search />
        </HeaderRight>
      </Header>

      <Quote>
        <PriceBlock>
          <Price>7.83</Price>
          <Change><span>4.40%</span><span>0.33</span></Change>
        </PriceBlock>
        {stats.map((s) => (
          <Stat key={s.label}>
            <StatLabel>{s.label}</StatLabel>
            {s.sup && <Sup>{s.sup}</Sup>}
            {s.dots && <Dots />}
            <StatValue $size={s.size} $color={s.color}>{s.value}</StatValue>
          </Stat>
        ))}
        <MoreButton>更多</MoreButton>
      </Quote>

      <Notice>
        <Speaker />
        <NoticeText>中报预披露：于2025-08-30披露2025年中报</NoticeText>
        <RedDot />
        <Cross size={40} color="#999" />
      </Notice>

      <TabBar $height={140} $left={0}>
        {["分时", "五日", "日K", "周K", "月K"].map((t) => (
          <Tab key={t} $width={212.5} $active={t === "日K"}>{t}</Tab>
        ))}
        <MoreTab>更多<Down w={20} h={15} color="#666" /></MoreTab>
        <GearWrap><Gear /></GearWrap>
      </TabBar>

      <MaRow>
        <Chip $width={145} $gap={4} $right={3}>均线<Down w={20} h={16} color="#666" /></Chip>
        <MaLegend>
          <MaItem $color={c.ink}>MA5:7.53<ArrowUp color={c.ink} /></MaItem>
          <MaItem $color={c.ma10}>10:7.36<ArrowUp color={c.ma10} /></MaItem>
          <MaItem $color={c.ma20}>20:7.22<ArrowUp color={c.ma20} /></MaItem>
          <MaItem $color={c.sub}>60:6.36<ArrowUp color={c.sub} /></MaItem>
        </MaLegend>
        <ChipGroup>
          <Chip $width={169} $right={20}>DK点<ChipCorner /></Chip>
          <Chip $width={176}>前复权</Chip>
        </ChipGroup>
      </MaRow>

      <Charts>
        <Column>
          <KChart />
          <MacdHead>
            <Chip $width={194} $gap={20} $right={4}>MACD<Down w={19} h={16} color="#666" /></Chip>
            <MacdValue $width={197} $gap={1} $color={c.ink}><Squeezed>DIF:0.19</Squeezed><ArrowUp color={c.ink} /></MacdValue>
            <MacdValue $width={215} $gap={21} $color={c.dea}><Squeezed>DEA:0.17</Squeezed><ArrowUp color={c.dea} /></MacdValue>
            <MacdValue $width={170} $gap={21} $color={c.macd}><Squeezed>M:0.03</Squeezed><ArrowUp color={c.macd} /></MacdValue>
            <NextButton>
              <svg width="24" height="40" viewBox="0 0 24 40">
                <path d="M4 3L18 20L4 37" fill="none" stroke="#fff" strokeWidth="5" strokeLinecap="round" strokeLinejoin="round" />
              </svg>
            </NextButton>
          </MacdHead>
          <MacdChart />
          <Axis>
            <Ticks />
            <AxisDates><span>20250509</span><span>20250630</span><span>20250825</span></AxisDates>
          </Axis>
        </Column>
        <Column>
          <ChipChart />
          <Legend>
            <LegendItem $color="#5cb947">套牢</LegendItem>
            <LegendItem $color="#e84a4a">获利</LegendItem>
            <LegendItem $color="#3380e3">平均</LegendItem>
          </Legend>
          <CostList>
            {costs.map(([k, v]) => (
              <CostRow key={k}><span>{k}</span><CostValue>{v}</CostValue></CostRow>
            ))}
            <CostRow $height={92} $muted>
              <Explain>说明<Info /></Explain>
              <CostValue $muted>2025-08-25</CostValue>
            </CostRow>
          </CostList>
        </Column>
        <Controls>
          {["first", "minus", "plus", "prev", "next", "full"].map((n) => (
            <RoundButton key={n} $gray={n === "next"}><ControlIcon name={n} /></RoundButton>
          ))}
        </Controls>
      </Charts>

      <PromoWrap>
        <Promo>
          <Megaphone />
          <Marquee>容！交易日14:30为你精选潜力股，点击获取机会名</Marquee>
          <Divider />
          <Cross size={43} color={c.orange} />
        </Promo>
      </PromoWrap>

      <TabBar $height={139} $left={37.5}>
        {["股吧", "盘口", "资讯", "公告", "研报", "财务", "资料"].map((t) => (
          <Tab key={t} $width={195} $active={t === "盘口"}>{t}</Tab>
        ))}
      </TabBar>

      <Ad>
        <AdArrow />
        <AdText $gap={26} $color="#ff4a00">你的自选股</AdText>
        <AdText $gap={18} $color="#333">有无主力正在进场?</AdText>
        <AdButton>一键查看</AdButton>
        <AdClose><Cross size={28} color="#fff" width={2.4} /></AdClose>
      </Ad>

      <BottomNav>
        <IndexBox>
          <Down w={28} h={10} color="#75757a" up />
          <IndexValue>3874.98</IndexValue>
          <IndexRow><span>上证</span><span>1.29%</span></IndexRow>
        </IndexBox>
        <NavItem><TradeIcon />交易</NavItem>
        <NavItem><PostIcon />发帖</NavItem>
        <NavItem><GridIcon />功能</NavItem>
        <NavItem><MoreIcon />设自选</NavItem>
        <HomeBar />
      </BottomNav>
    </Screen>
  );
}
